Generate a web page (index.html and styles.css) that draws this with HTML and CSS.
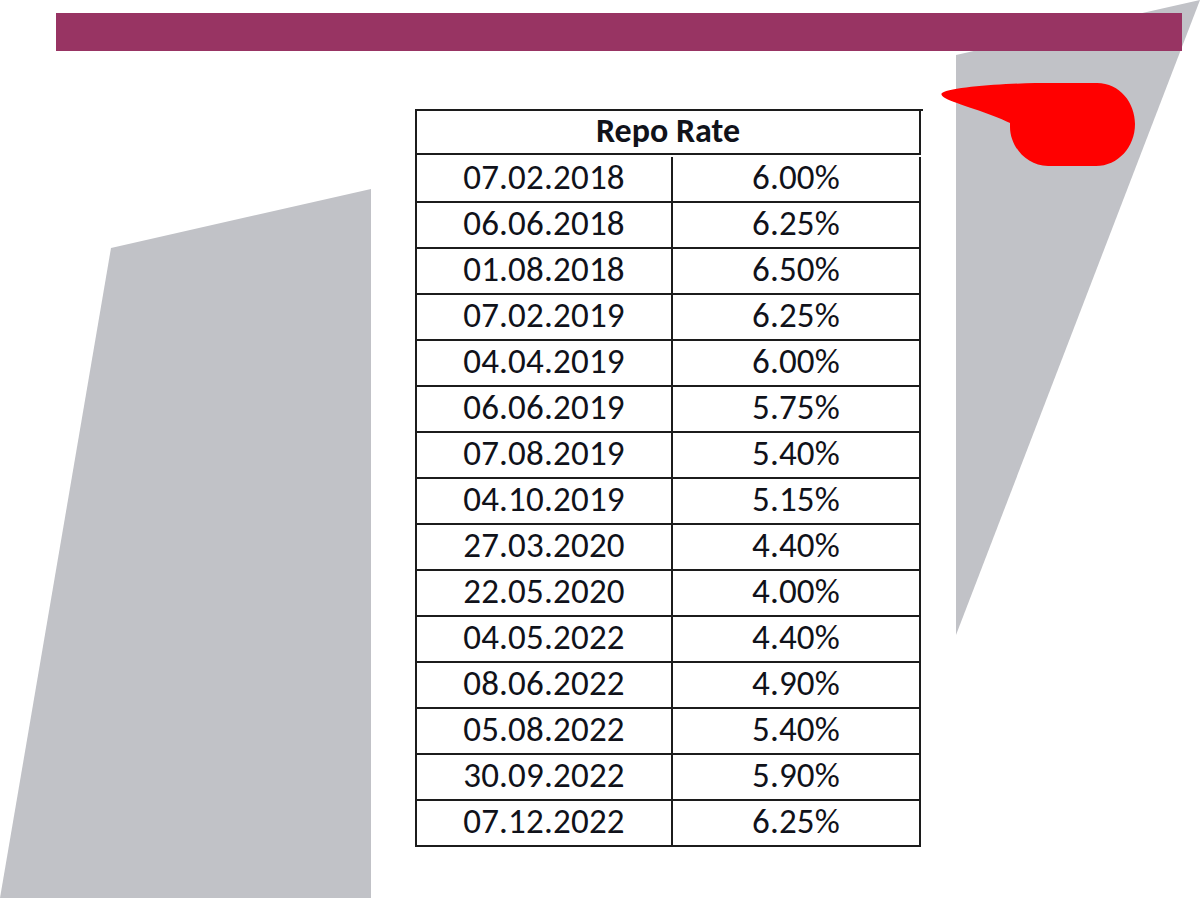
FILE: index.html
```html
<!DOCTYPE html>
<html lang="en">
<head>
<meta charset="utf-8">
<title>Repo Rate</title>
<link rel="stylesheet" href="styles.css">
</head>
<body>
<div class="slide">
  <svg class="decor" width="1200" height="898" viewBox="0 0 1200 898" aria-hidden="true">
    <polygon points="111,248 371,189 371,898 0,898" fill="#c1c2c7"/>
    <polygon points="956,55 1200,0 956,635" fill="#c1c2c7"/>
  </svg>
  <div class="bar"></div>
  <svg class="pointer" width="1200" height="898" viewBox="0 0 1200 898" aria-hidden="true">
    <path d="M942,93 C952,87 1000,84 1035,83 L1097,83 C1120,83 1135,103 1135,124 C1135,147 1118,166 1096,166 L1048,166 C1026,166 1010,146 1010,127 L1010,123 C990,113 956,104 945,98 Q940,95 942,93 Z" fill="#ff0000"/>
  </svg>
  <div class="rates">
    <div class="head">Repo Rate</div>
    <div class="cell">07.02.2018</div><div class="cell">6.00%</div>
    <div class="cell">06.06.2018</div><div class="cell">6.25%</div>
    <div class="cell">01.08.2018</div><div class="cell">6.50%</div>
    <div class="cell">07.02.2019</div><div class="cell">6.25%</div>
    <div class="cell">04.04.2019</div><div class="cell">6.00%</div>
    <div class="cell">06.06.2019</div><div class="cell">5.75%</div>
    <div class="cell">07.08.2019</div><div class="cell">5.40%</div>
    <div class="cell">04.10.2019</div><div class="cell">5.15%</div>
    <div class="cell">27.03.2020</div><div class="cell">4.40%</div>
    <div class="cell">22.05.2020</div><div class="cell">4.00%</div>
    <div class="cell">04.05.2022</div><div class="cell">4.40%</div>
    <div class="cell">08.06.2022</div><div class="cell">4.90%</div>
    <div class="cell">05.08.2022</div><div class="cell">5.40%</div>
    <div class="cell">30.09.2022</div><div class="cell">5.90%</div>
    <div class="cell">07.12.2022</div><div class="cell">6.25%</div>
  </div>
</div>
</body>
</html>
```

FILE: styles.css
```css
html, body {
  margin: 0;
  padding: 0;
  background: #ffffff;
}

.slide {
  position: relative;
  width: 1200px;
  height: 898px;
  overflow: hidden;
  padding-top: 13px;
  box-sizing: border-box;
}

.decor,
.pointer {
  position: absolute;
  left: 0;
  top: 0;
}

.pointer {
  z-index: 2;
}

.bar {
  position: relative;
  z-index: 1;
  margin-left: 56px;
  width: 1126px;
  height: 38px;
  background: #983463;
}

.rates {
  position: relative;
  z-index: 1;
  margin-top: 58px;
  margin-left: 415px;
  width: 506px;
  display: grid;
  grid-template-columns: 256px 248px;
  grid-auto-rows: 46px;
  border-top: 2px solid #1c1c1c;
  border-left: 2px solid #1c1c1c;
  background: #ffffff;
  font-family: "Carlito", "Open Sans", sans-serif;
  color: #10121a;
}

.head {
  grid-column: 1 / 3;
  display: flex;
  align-items: center;
  justify-content: center;
  font-weight: 700;
  font-size: 34px;
  padding-bottom: 3px;
  border-right: 2px solid #1c1c1c;
  border-bottom: 2px solid #1c1c1c;
  box-sizing: border-box;
}

.rates .head {
  height: 44px;
}

.cell {
  display: flex;
  align-items: center;
  justify-content: center;
  font-size: 35px;
  letter-spacing: 0.2px;
  padding-bottom: 5px;
  border-right: 2px solid #1c1c1c;
  border-bottom: 2px solid #1c1c1c;
  box-sizing: border-box;
}
```
